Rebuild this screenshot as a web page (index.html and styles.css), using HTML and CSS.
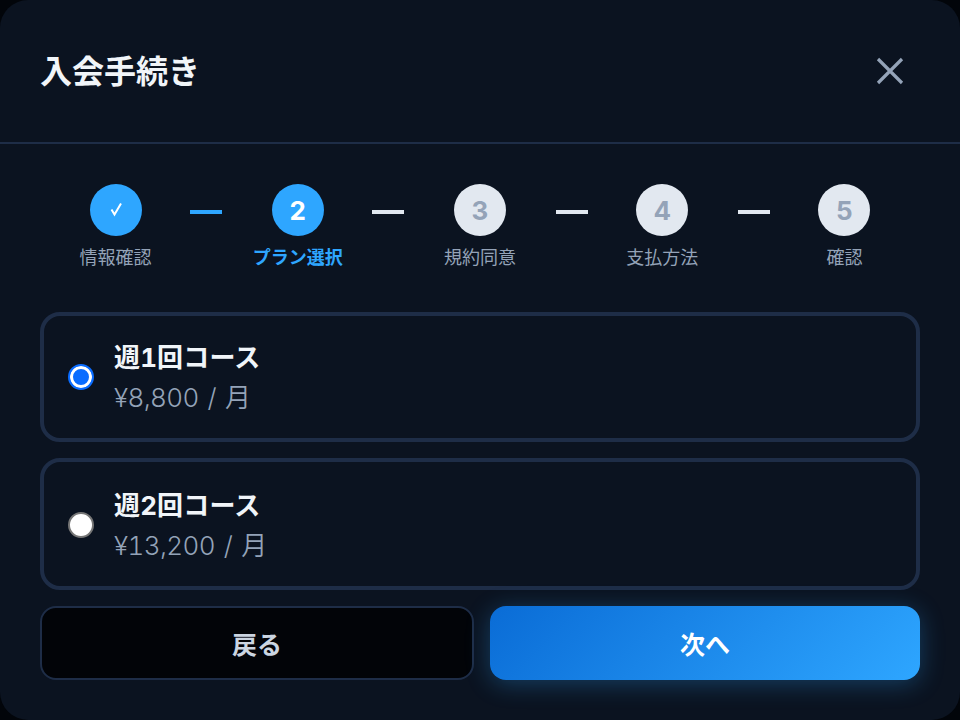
FILE: index.html
```html
<!DOCTYPE html>
<html lang="ja">
<head>
    <meta charset="UTF-8">
    <meta name="viewport" content="width=device-width, initial-scale=1.0">
    <title>入会手続き</title>
    <link rel="stylesheet" href="styles.css">
</head>
<body>

    <div class="modal">
        <div class="modal-header">
            <h1 class="modal-title">入会手続き</h1>
            <button class="close-btn" aria-label="閉じる">
                <svg width="28" height="28" viewBox="0 0 28 28" fill="none" stroke="currentColor" stroke-width="3.2">
                    <path d="M2 2 L26 26 M26 2 L2 26"/>
                </svg>
            </button>
        </div>

        <div class="stepper">
            <div class="step">
                <div class="step-circle done">
                    <svg width="16" height="16" viewBox="0 0 16 16" fill="none" stroke="currentColor" stroke-width="2">
                        <path d="M3.5 7.5 L6.5 12.5 L13 1.5"/>
                    </svg>
                </div>
                <div class="step-label">情報確認</div>
            </div>
            <div class="step-line active"></div>
            <div class="step">
                <div class="step-circle current">2</div>
                <div class="step-label current">プラン選択</div>
            </div>
            <div class="step-line early"></div>
            <div class="step">
                <div class="step-circle">3</div>
                <div class="step-label">規約同意</div>
            </div>
            <div class="step-line late"></div>
            <div class="step">
                <div class="step-circle">4</div>
                <div class="step-label">支払方法</div>
            </div>
            <div class="step-line late"></div>
            <div class="step">
                <div class="step-circle">5</div>
                <div class="step-label">確認</div>
            </div>
        </div>

        <div class="plans">
            <label class="plan">
                <input class="plan-radio" type="radio" name="plan" checked>
                <span class="plan-text">
                    <span class="plan-name">週1回コース</span>
                    <span class="plan-price">¥8,800 / 月</span>
                </span>
            </label>
            <label class="plan plan-tall">
                <input class="plan-radio" type="radio" name="plan">
                <span class="plan-text">
                    <span class="plan-name">週2回コース</span>
                    <span class="plan-price">¥13,200 / 月</span>
                </span>
            </label>
        </div>

        <div class="actions">
            <button class="back-btn">戻る</button>
            <button class="next-btn">次へ</button>
        </div>
    </div>

</body>
</html>
```

FILE: styles.css
```css
* {
    box-sizing: border-box;
}

body {
    margin: 0;
    background-color: #02050a;
    font-family: Inter, "Noto Sans CJK JP", sans-serif;
}

.modal {
    width: 960px;
    height: 720px;
    background-color: #0b1320;
    border-radius: 28px;
    overflow: hidden;
}

.modal-header {
    height: 144px;
    padding: 0 40px 0 40px;
    display: flex;
    justify-content: space-between;
    align-items: flex-start;
    border-bottom: 2px solid #1e2d47;
}

.modal-title {
    margin: 48px 0 0;
    font-size: 32px;
    line-height: 48px;
    font-weight: 700;
    color: #f1f5f9;
}

.close-btn {
    margin: 57px 16px 0 0;
    padding: 0;
    width: 28px;
    height: 28px;
    background: none;
    border: none;
    color: #94a3b8;
}

.close-btn svg {
    display: block;
}

/* Stepper */
.stepper {
    display: flex;
    align-items: flex-start;
    padding: 40px 40.5px 0;
}

.step {
    flex: 1;
    display: flex;
    flex-direction: column;
    align-items: center;
}

.step-circle {
    width: 52px;
    height: 52px;
    border-radius: 50%;
    display: flex;
    justify-content: center;
    align-items: center;
    background-color: #e2e8f0;
    color: #94a3b8;
    font-size: 26px;
    font-weight: 700;
}

.step-circle.done,
.step-circle.current {
    background-color: #2ea6ff;
    color: #fff;
}

.step-label {
    margin-top: 8px;
    font-size: 18px;
    line-height: 27px;
    color: #94a3b8;
}

.step-label.current {
    color: #2ea6ff;
    font-weight: 700;
}

.step-line {
    width: 32px;
    height: 4px;
    margin-top: 26px;
    background-color: #e2e8f0;
}

.step-line.active {
    background-color: #2ea6ff;
}

.step-line.active,
.step-line.early {
    margin-left: -0.7px;
    margin-right: 0.7px;
}

.step-line.late {
    margin-left: 0.7px;
    margin-right: -0.7px;
}

/* Plans */
.plans {
    display: flex;
    flex-direction: column;
    gap: 16px;
    padding: 41px 40px 0;
}

.plan {
    display: flex;
    align-items: center;
    gap: 20px;
    height: 130px;
    padding: 0 24px;
    border: 4px solid #1e2d47;
    border-radius: 20px;
}

.plan-tall {
    height: 132px;
    padding-top: 2px;
}

.plan-radio {
    appearance: none;
    flex: none;
    width: 26px;
    height: 26px;
    margin: 0;
    border: 2px solid #767676;
    border-radius: 50%;
    background-color: #fff;
}

.plan-radio:checked {
    border: 2px solid #0a6cff;
    background-color: #0a6cff;
    box-shadow: inset 0 0 0 3px #fff;
}

.plan-text {
    display: flex;
    flex-direction: column;
    font-variant-numeric: tabular-nums;
}

.plan-name {
    font-size: 26px;
    line-height: 40px;
    font-weight: 700;
    letter-spacing: 0.15px;
    color: #f1f5f9;
}

.plan-price {
    font-size: 26px;
    line-height: 39px;
    letter-spacing: -0.6px;
    word-spacing: 2.5px;
    font-weight: 350;
    color: #94a3b8;
}

/* Buttons */
.actions {
    display: flex;
    gap: 16px;
    padding: 16px 40px 0;
}

.back-btn,
.next-btn {
    flex: 1;
    height: 74px;
    border-radius: 16px;
    font-family: inherit;
    font-size: 25px;
    font-weight: 700;
}

.back-btn {
    background-color: #020408;
    border: 2px solid #1e2d47;
    color: #cbd5e1;
}

.next-btn {
    background: linear-gradient(135deg, #0a6cd6, #2ea6ff);
    border: none;
    color: #fff;
    box-shadow: 0 4px 24px rgba(46, 166, 255, 0.3);
}
```
